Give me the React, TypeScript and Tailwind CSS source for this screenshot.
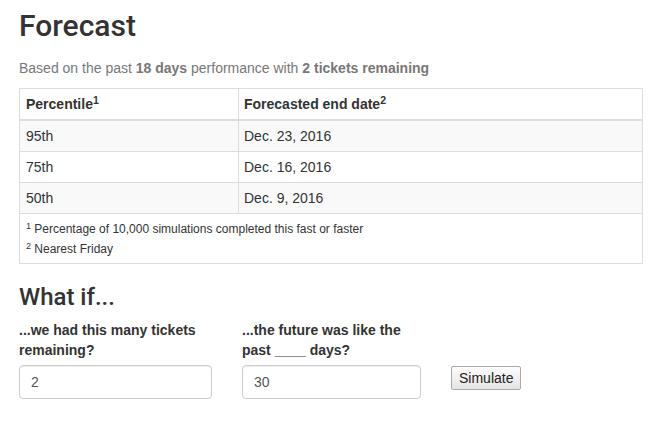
import React, { useState } from 'react';

const rows = [
  { pct: '95th', date: 'Dec. 23, 2016' },
  { pct: '75th', date: 'Dec. 16, 2016' },
  { pct: '50th', date: 'Dec. 9, 2016' },
];

const headingFont = { fontFamily: 'Roboto, "Liberation Sans", Arial, sans-serif' };

export default function App() {
  const [tickets, setTickets] = useState('2');
  const [days, setDays] = useState('30');

  return (
    <div
      className="min-h-screen bg-white pl-[19px] pr-[26px] pt-[9px] text-[14px] leading-5 text-[#333]"
      style={{ fontFamily: '"Liberation Sans", Arial, sans-serif' }}
    >
      {/* Header */}
      <h2 className="text-[30px] leading-[33px] font-medium" style={headingFont}>
        Forecast
      </h2>
      <p className="mt-[16px] mb-[10px] text-[#777]">
        Based on the past <b>18 days</b> performance with <b>2 tickets remaining</b>
      </p>

      {/* Forecast table */}
      <table className="w-[624px] border-collapse border border-[#ddd]">
        <thead>
          <tr>
            <th className="w-[219px] border border-b-2 border-[#ddd] px-[6px] py-[5px] text-left font-bold">
              Percentile<sup>1</sup>
            </th>
            <th className="border border-b-2 border-[#ddd] px-[5px] py-[5px] text-left font-bold">
              Forecasted end date<sup>2</sup>
            </th>
          </tr>
        </thead>
        <tbody>
          {rows.map((r, i) => (
            <tr key={r.pct} className={i % 2 === 0 ? 'bg-[#f9f9f9]' : 'bg-white'}>
              <td className="border border-[#ddd] px-[6px] py-[5px]">{r.pct}</td>
              <td className="border border-[#ddd] px-[5px] py-[5px]">{r.date}</td>
            </tr>
          ))}
          <tr>
            <td colSpan={2} className="border border-[#ddd] px-[6px] pt-[5px] pb-[4px] text-[12px] leading-5">
              <div>
                <sup>1</sup> Percentage of 10,000 simulations completed this fast or faster
              </div>
              <div>
                <sup>2</sup> Nearest Friday
              </div>
            </td>
          </tr>
        </tbody>
      </table>

      {/* What if form */}
      <h3 className="mt-[20px] mb-[10px] text-[24px] leading-[26px] font-medium" style={headingFont}>
        What if...
      </h3>
      <div className="grid grid-cols-[193px_179px_auto] gap-x-[30px] gap-y-[5px] items-start">
        <label className="font-bold">...we had this many tickets remaining?</label>
        <label className="font-bold">...the future was like the past ____ days?</label>
        <div />
        <input
          value={tickets}
          onChange={(e) => setTickets(e.target.value)}
          className="h-[34px] w-full rounded border border-[#ccc] px-[11px] text-[14px] text-[#555] shadow-[inset_0_1px_1px_rgba(0,0,0,0.075)] outline-none"
        />
        <input
          value={days}
          onChange={(e) => setDays(e.target.value)}
          className="h-[34px] w-full rounded border border-[#ccc] px-[11px] text-[14px] text-[#555] shadow-[inset_0_1px_1px_rgba(0,0,0,0.075)] outline-none"
        />
        <button
          type="button"
          className="mt-px h-[24px] justify-self-start rounded-[2px] border border-[#a9a9a9] bg-gradient-to-b from-[#fdfdfd] to-[#e4e4e4] px-[7px] text-[14px] leading-[22px] text-[#222]"
        >
          Simulate
        </button>
      </div>
    </div>
  );
}
